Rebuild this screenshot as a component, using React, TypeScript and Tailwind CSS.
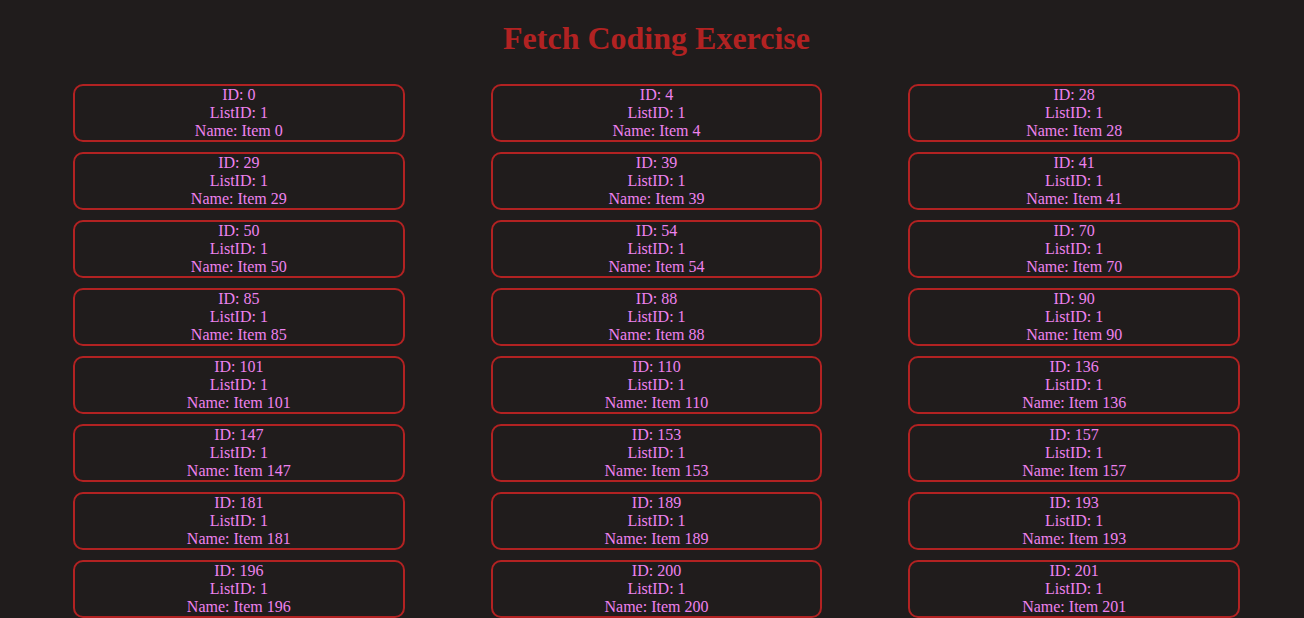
const ITEM_IDS = [
  0, 4, 28, 29, 39, 41, 50, 54, 70, 85, 88, 90, 101, 110, 136, 147, 153, 157,
  181, 189, 193, 196, 200, 201,
];

type Item = { id: number; listId: number; name: string };

const items: Item[] = ITEM_IDS.map((id) => ({
  id,
  listId: 1,
  name: `Item ${id}`,
}));

export default function App() {
  return (
    <div className="min-h-screen bg-[#201c1c] pl-[73px] pr-[64px] font-['Liberation_Serif','Times_New_Roman',serif]">
      <h1 className="pt-[20px] text-center text-[32px] font-bold leading-[37px] text-[#b22222]">
        Fetch Coding Exercise
      </h1>

      <ul className="mt-[27px] grid grid-cols-3 gap-x-[86px] gap-y-[10px]">
        {items.map((item) => (
          <li
            key={item.id}
            className="rounded-[10px] border-2 border-[#b22222] text-center text-base leading-[18px] text-[#ee82ee]"
          >
            <div>ID: {item.id}</div>
            <div>ListID: {item.listId}</div>
            <div>Name: {item.name}</div>
          </li>
        ))}
      </ul>
    </div>
  );
}
